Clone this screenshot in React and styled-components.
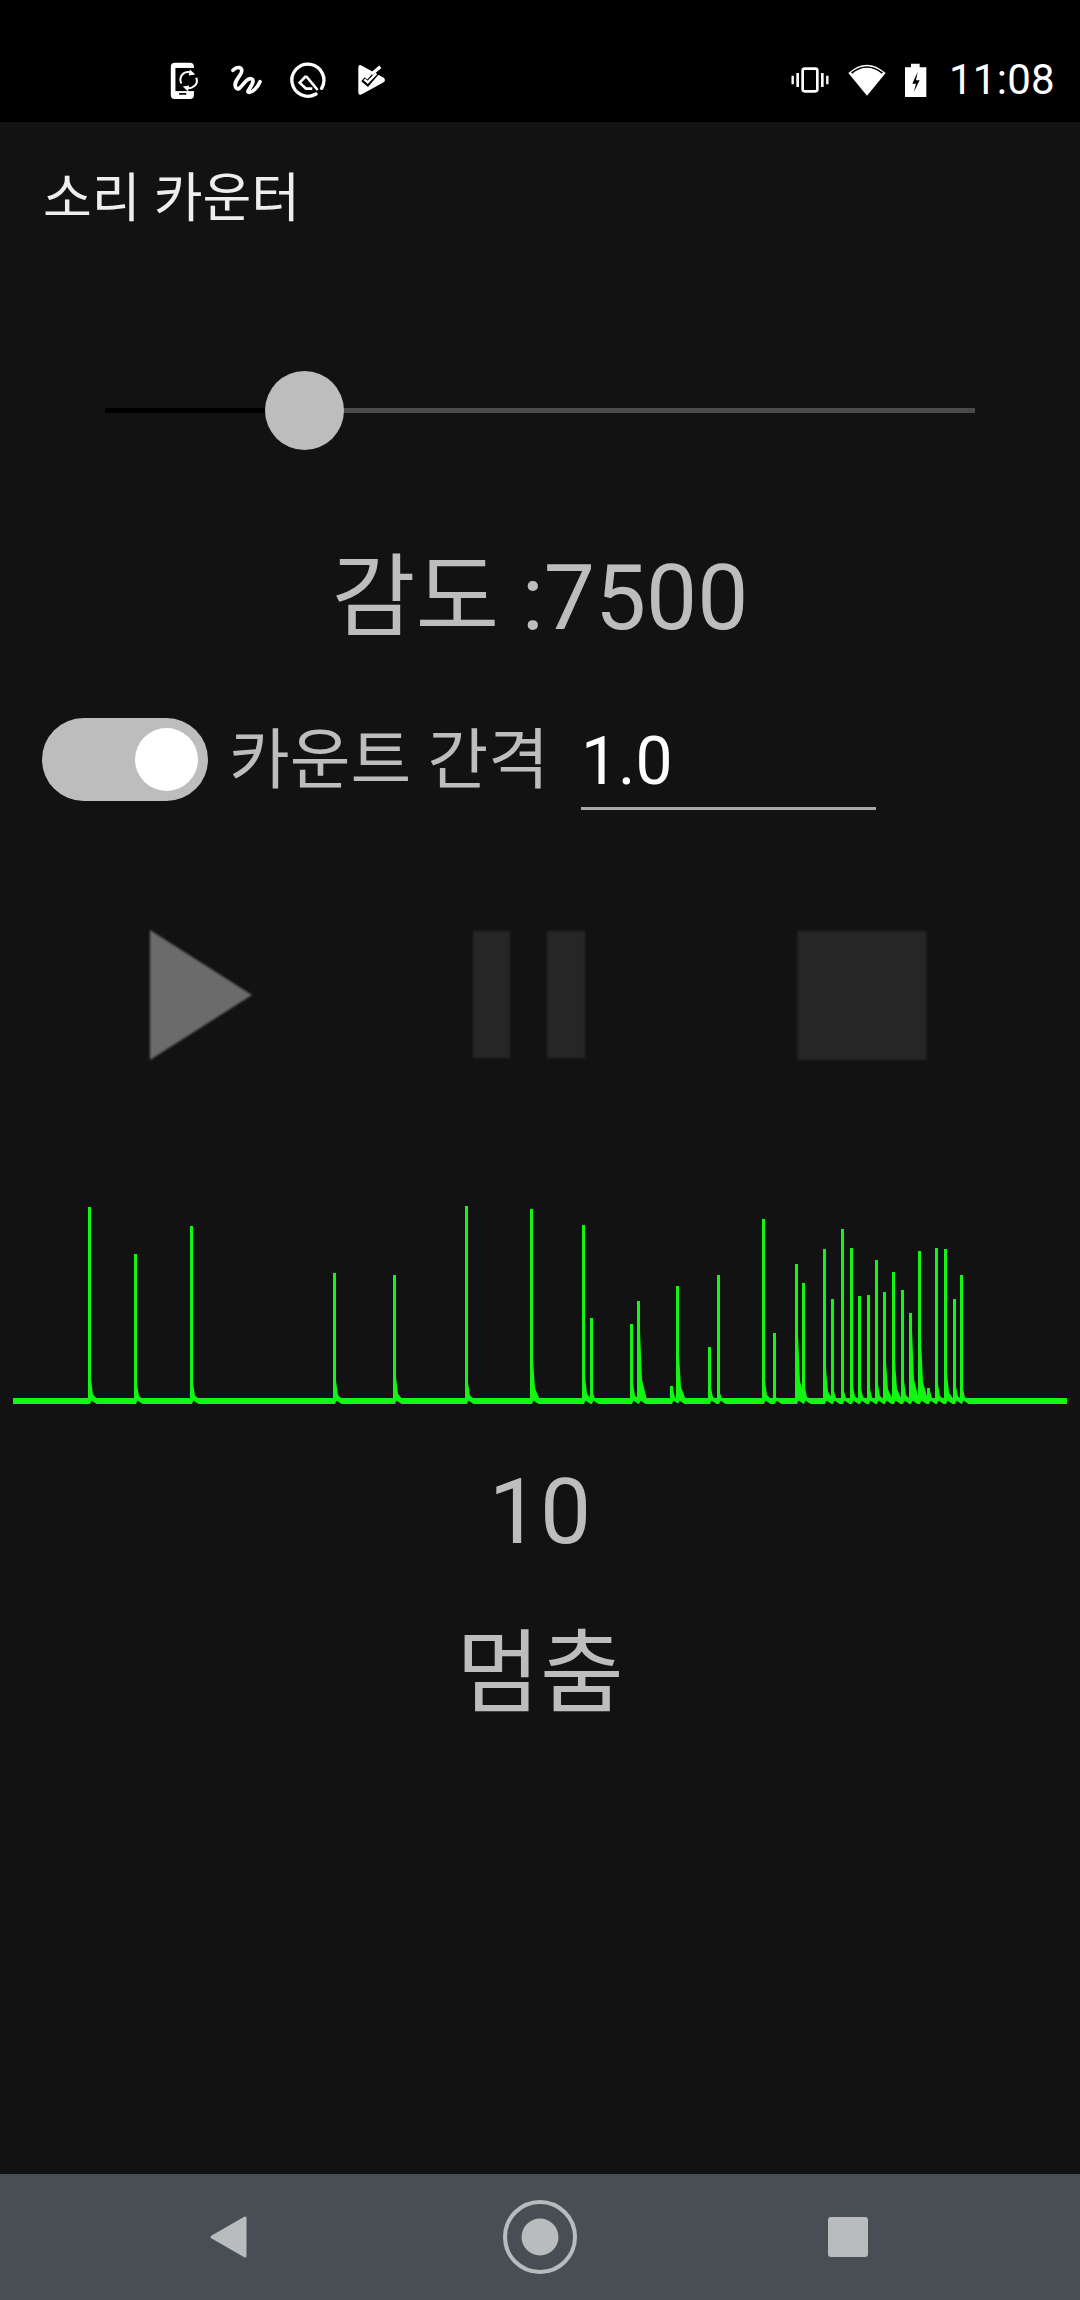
import React from 'react';
import styled, { createGlobalStyle } from 'styled-components';

const GlobalStyle = createGlobalStyle`
  html, body {
    margin: 0;
    padding: 0;
    background: #121212;
  }
`;

const Screen = styled.div`
  width: 1080px;
  height: 2300px;
  display: flex;
  flex-direction: column;
  overflow: hidden;
  background: #121212;
  font-family: Roboto, "Noto Sans CJK KR", sans-serif;
`;

const StatusBar = styled.div`
  height: 122px;
  flex: none;
  background: #000;
  display: flex;
  align-items: center;
  justify-content: space-between;
  padding: 38px 25px 0 170px;
  box-sizing: border-box;
`;

const StatusGroup = styled.div`
  display: flex;
  align-items: center;
  gap: ${p => p.$gap}px;
`;

const Clock = styled.span`
  color: #fff;
  font-size: 42px;
  line-height: 48px;
  margin-left: 4px;
  letter-spacing: 0.3px;
`;

const Main = styled.div`
  flex: 1;
  display: flex;
  flex-direction: column;
  min-height: 0;
`;

const Title = styled.div`
  color: #eeeeee;
  font-size: 53px;
  line-height: 76px;
  padding: 39px 0 0 43px;
`;

const SliderRow = styled.div`
  position: relative;
  height: 5px;
  margin: 171px 105px 0;
  background: #4a4a4a;
`;

const SliderFill = styled.div`
  height: 100%;
  background: #000;
`;

const SliderThumb = styled.div`
  position: absolute;
  top: -37px;
  width: 79px;
  height: 79px;
  margin-left: -40px;
  border-radius: 50%;
  background: #bdbdbd;
`;

const BigText = styled.div`
  color: #bdbdbd;
  font-size: 91px;
  line-height: 112px;
  text-align: center;
  margin-top: ${p => p.$top}px;
`;

const IntervalRow = styled.div`
  display: flex;
  align-items: flex-start;
  margin-top: 64px;
  padding-left: 42px;
`;

const Toggle = styled.div`
  position: relative;
  width: 166px;
  height: 83px;
  flex: none;
  border-radius: 42px;
  background: #bdbdbd;
`;

const ToggleKnob = styled.div`
  position: absolute;
  top: 10px;
  right: 10px;
  width: 63px;
  height: 63px;
  border-radius: 50%;
  background: #fff;
`;

const IntervalLabel = styled.span`
  color: #bdbdbd;
  font-size: 66px;
  line-height: 85px;
  margin-left: 21px;
  white-space: nowrap;
`;

const IntervalInput = styled.div`
  width: 295px;
  height: 92px;
  margin-left: 32px;
  box-sizing: border-box;
  border-bottom: 3px solid #a9a9a9;
  color: #fff;
  font-size: 66px;
  line-height: 88px;
`;

const ControlRow = styled.div`
  display: grid;
  grid-template-columns: repeat(3, 331px);
  justify-items: center;
  padding-left: 35px;
  margin-top: 113px;
`;

const ControlIcon = styled.svg`
  display: block;
  width: 144px;
  height: 144px;
  filter: blur(1px);
`;

const Chart = styled.svg`
  display: block;
  width: 1080px;
  height: 220px;
  margin-top: 134px;
`;

const NavBar = styled.div`
  height: 126px;
  flex: none;
  box-sizing: border-box;
  background: #474f55;
  display: grid;
  grid-template-columns: repeat(3, 308px);
  align-items: center;
  justify-items: center;
  padding: 0 78px;
`;

const NavIcon = styled.svg`
  display: block;
  width: 80px;
  height: 80px;
`;

// x, top of the spike, height of the decay tail above the baseline
const spikes = [
  [89, 1206, 22], [135, 1253, 17], [191, 1225, 18], [334, 1272, 20], [394, 1274, 24],
  [466, 1205, 18], [531, 1208, 42], [583, 1224, 24], [591, 1317, 8], [631, 1323, 18],
  [638, 1300, 71], [671, 1385, 12], [677, 1285, 47], [709, 1346, 13], [718, 1274, 8],
  [763, 1218, 20], [774, 1332, 4], [796, 1263, 67], [803, 1282, 13], [824, 1248, 32],
  [832, 1298, 10], [842, 1228, 10], [851, 1247, 15], [859, 1295, 13], [868, 1294, 12],
  [876, 1259, 17], [884, 1291, 39], [893, 1271, 40], [902, 1289, 20], [910, 1312, 72],
  [919, 1250, 63], [928, 1387, 10], [936, 1247, 17], [945, 1248, 28], [954, 1298, 15],
  [961, 1274, 12],
];

const BASE = 1400;
const OFFSET = 1200;

const Waveform = () => (
  <Chart viewBox={`0 ${OFFSET} 1080 220`}>
    <rect x="13" y={BASE - 3} width="1054" height="6" fill="#13f513" />
    {spikes.map(([x, top, tail]) => (
      <g key={x}>
        <path d={`M${x + 1} ${BASE + 3}l1.5 -3.5l5 3.5z`} fill="#121212" />
        <path
          d={`M${x - 1} ${BASE}V${top}h3V${BASE - tail}L${x + 4} ${BASE - tail * 0.3}L${x + 9} ${BASE - 1}z`}
          fill="#13f513"
        />
      </g>
    ))}
  </Chart>
);

const PhoneSync = () => (
  <svg width="33" height="37" viewBox="88 63 99 112">
    <rect x="90" y="65" width="70" height="110" rx="12" fill="#fff" />
    <rect x="104" y="81" width="58" height="70" fill="#000" />
    <rect x="115" y="157" width="22" height="5" fill="#000" />
    <path d="M122 128a23 23 0 0 1 36 -28M167 110a23 23 0 0 1 -34 28" fill="none" stroke="#fff" strokeWidth="6" />
    <path d="M148 86l16 15l-20 3zM142 152l-16 -15l20 -3z" fill="#fff" />
  </svg>
);

const Squiggle = () => (
  <svg width="32" height="30" viewBox="264 78 96 90">
    <path
      d="M273 94C286 80 304 84 298 101C292 116 272 130 282 146C290 158 300 138 312 126C324 114 340 118 330 136C322 152 312 160 322 160C332 160 346 146 354 128"
      fill="none"
      stroke="#fff"
      strokeWidth="11"
      strokeLinecap="round"
    />
  </svg>
);

const QLogo = () => (
  <svg width="38" height="38" viewBox="446 63 114 114">
    <path d="M527 162A48 48 0 1 1 544 145" fill="none" stroke="#fff" strokeWidth="10" strokeLinecap="round" />
    <path d="M497 108L478 128L497 146H516" fill="none" stroke="#fff" strokeWidth="8" />
    <path d="M497 108L532 150" fill="none" stroke="#fff" strokeWidth="8" />
  </svg>
);

const PlayCheck = () => (
  <svg width="33" height="32" viewBox="641 72 99 96">
    <path d="M654 82Q655 70 666 78L730 113Q738 120 730 127L666 162Q655 168 654 158z" fill="#fff" />
    <path d="M668 118L682 130L716 90" fill="none" stroke="#000" strokeWidth="16" />
    <path d="M694 102L720 80" fill="none" stroke="#fff" strokeWidth="10" />
    <path d="M672 118L682 127L708 100" fill="none" stroke="#fff" strokeWidth="7" />
  </svg>
);

const Vibrate = () => (
  <svg width="38" height="26" viewBox="66 82 114 78">
    <rect x="101" y="87" width="44" height="68" rx="6" fill="none" stroke="#fff" strokeWidth="8" />
    <path d="M86 100v42M160 100v42" stroke="#fff" strokeWidth="8" fill="none" />
    <path d="M71 108v26M175 108v26" stroke="#fff" strokeWidth="7" fill="none" />
  </svg>
);

const Wifi = () => (
  <svg width="40" height="34" viewBox="236 68 120 102">
    <path d="M240 98Q295 48 352 98L296 166z" fill="#fff" />
    <path d="M250 98Q295 62 342 98" fill="none" stroke="#000" strokeWidth="5" />
  </svg>
);

const Battery = () => (
  <svg width="22" height="34" viewBox="402 68 66 102">
    <path d="M420 70h26v11h20v89h-64v-89h18z" fill="#fff" />
    <path d="M440 94L424 130h11L428 156L446 120h-11z" fill="#000" />
  </svg>
);

const App = () => (
  <Screen>
    <GlobalStyle />
    <StatusBar>
      <StatusGroup $gap={27}>
        <PhoneSync />
        <Squiggle />
        <QLogo />
        <PlayCheck />
      </StatusGroup>
      <StatusGroup $gap={18}>
        <Vibrate />
        <Wifi />
        <Battery />
        <Clock>11:08</Clock>
      </StatusGroup>
    </StatusBar>
    <Main>
      <Title>소리 카운터</Title>
      <SliderRow>
        <SliderFill style={{ width: '23%' }} />
        <SliderThumb style={{ left: '23%' }} />
      </SliderRow>
      <BigText $top={129}>감도 :7500</BigText>
      <IntervalRow>
        <Toggle>
          <ToggleKnob />
        </Toggle>
        <IntervalLabel>카운트 간격</IntervalLabel>
        <IntervalInput>1.0</IntervalInput>
      </IntervalRow>
      <ControlRow>
        <ControlIcon viewBox="0 0 144 144">
          <path d="M21 7L123 72L21 137z" fill="#6b6b6b" />
        </ControlIcon>
        <ControlIcon viewBox="0 0 144 144">
          <path d="M13 8h37v127H13zM87 8h38v127H87z" fill="#262626" />
        </ControlIcon>
        <ControlIcon viewBox="0 0 144 144">
          <rect x="6.5" y="8" width="129" height="129" fill="#262626" />
        </ControlIcon>
      </ControlRow>
      <Waveform />
      <BigText $top={35}>10</BigText>
      <BigText $top={50}>멈춤</BigText>
    </Main>
    <NavBar>
      <NavIcon viewBox="0 0 80 80">
        <path d="M20 40L53 21V59z" fill="#b8bcbd" stroke="#b8bcbd" strokeWidth="3" strokeLinejoin="round" />
      </NavIcon>
      <NavIcon viewBox="0 0 80 80">
        <circle cx="40" cy="40" r="35" fill="none" stroke="#b8bcbd" strokeWidth="4" />
        <circle cx="40" cy="40" r="18.5" fill="#b8bcbd" />
      </NavIcon>
      <NavIcon viewBox="0 0 80 80">
        <rect x="20" y="20" width="40" height="40" rx="3" fill="#b8bcbd" />
      </NavIcon>
    </NavBar>
  </Screen>
);

export default App;
